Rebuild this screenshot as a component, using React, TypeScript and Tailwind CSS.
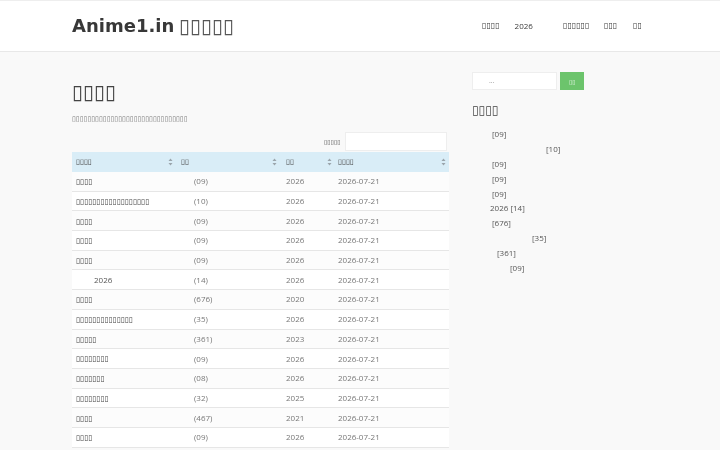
import React from "react";

const T = ({ n, className = "" }: { n: number; className?: string }) => (
  <span className={"inline-block will-change-transform font-['DejaVu_Sans'] " + className}>{"▯".repeat(n)}</span>
);

const Sort = () => (
  <svg width="5" height="8" viewBox="0 0 5 8" className="shrink-0">
    <path d="M2.5 0.5 L4.5 3 L0.5 3 Z" fill="#9aa4ab" />
    <path d="M2.5 7.5 L4.5 5 L0.5 5 Z" fill="#9aa4ab" />
  </svg>
);

const rows: { n: number; pre?: string; ep: string; year: string }[] = [
  { n: 4, ep: "(09)", year: "2026" },
  { n: 18, ep: "(10)", year: "2026" },
  { n: 4, ep: "(09)", year: "2026" },
  { n: 4, ep: "(09)", year: "2026" },
  { n: 4, ep: "(09)", year: "2026" },
  { n: 0, pre: "2026", ep: "(14)", year: "2026" },
  { n: 4, ep: "(676)", year: "2020" },
  { n: 14, ep: "(35)", year: "2026" },
  { n: 5, ep: "(361)", year: "2023" },
  { n: 8, ep: "(09)", year: "2026" },
  { n: 7, ep: "(08)", year: "2026" },
  { n: 8, ep: "(32)", year: "2025" },
  { n: 4, ep: "(467)", year: "2021" },
  { n: 4, ep: "(09)", year: "2026" },
];

const side: { indent: string; text: string }[] = [
  { indent: "pl-[20px]", text: "[09]" },
  { indent: "pl-[74px]", text: "[10]" },
  { indent: "pl-[20px]", text: "[09]" },
  { indent: "pl-[20px]", text: "[09]" },
  { indent: "pl-[20px]", text: "[09]" },
  { indent: "pl-[18px]", text: "2026 [14]" },
  { indent: "pl-[20px]", text: "[676]" },
  { indent: "pl-[60px]", text: "[35]" },
  { indent: "pl-[25px]", text: "[361]" },
  { indent: "pl-[38px]", text: "[09]" },
];

export default function App() {
  return (
    <div className="min-h-[450px] bg-[#f9f9f9] font-['Open_Sans',sans-serif] text-[#555]">
      <header className="h-[52px] bg-white border-t border-t-[#eeeeee] border-b border-b-[#e8e8e8]">
        <div className="w-[576px] mx-auto h-full flex items-center justify-between">
          <h1 className="will-change-transform font-['DejaVu_Sans',sans-serif] font-bold text-[18px] text-[#383838] leading-none flex items-center">
            Anime1.in
            <T n={5} className="ml-[5px] font-normal text-[20px] text-[#555]" />
          </h1>
          <nav className="will-change-transform flex items-center text-[8px] text-[#3a3a3a] mr-[7px]">
            <T n={4} className="text-[8px]" />
            <span className="ml-[15px]">2026</span>
            <T n={6} className="text-[8px] ml-[30px]" />
            <T n={3} className="text-[8px] ml-[15px]" />
            <T n={2} className="text-[8px] ml-[15px]" />
          </nav>
        </div>
      </header>

      <div className="w-[576px] mx-auto flex gap-[23px]">
        <main className="will-change-transform w-[377px] pt-[28px]">
          <h2 className="text-[20px] leading-[24px] text-[#444]">
            <T n={4} />
          </h2>
          <p className="mt-[8px] text-[8px] leading-[12px] text-[#777]">
            <T n={30} className="text-[7px]" />
          </p>
          <div className="mt-[7px] flex items-center justify-end gap-[4px] pr-[2px]">
            <T n={5} className="text-[6px] text-[#444]" />
            <div className="w-[102px] h-[19px] bg-white border border-[#eeeeee]" />
          </div>
          <div className="mt-[1px] text-[8px]">
            <div className="flex h-[20px] items-center bg-[#d9edf7] text-[#444]">
              <div className="w-[104px] flex items-center justify-between pl-[4px] pr-[3px]">
                <T n={4} className="text-[7.2px]" />
                <Sort />
              </div>
              <div className="w-[105px] flex items-center justify-between pl-[5px] pr-[4px]">
                <T n={2} className="text-[7.2px]" />
                <Sort />
              </div>
              <div className="w-[53px] flex items-center justify-between pl-[5px] pr-[2px]">
                <T n={2} className="text-[7.2px]" />
                <Sort />
              </div>
              <div className="w-[115px] flex items-center justify-between pl-[4px] pr-[3px]">
                <T n={4} className="text-[7.2px]" />
                <Sort />
              </div>
            </div>
            {rows.map((r, i) => (
              <div
                key={i}
                className={
                  "flex h-[19.7px] items-center border-b border-[#e6e6e6] " +
                  (i % 2 === 0 ? "bg-[#fcfcfc]" : "bg-white")
                }
              >
                <div className="w-[104px] pl-[4px] text-[#444]">
                  {r.pre ? (
                    <span className="pl-[18px] text-[#555]">{r.pre}</span>
                  ) : (
                    <T n={r.n} className="text-[7.4px]" />
                  )}
                </div>
                <div className="w-[105px] pl-[18px] text-[#777]">{r.ep}</div>
                <div className="w-[53px] pl-[5px] text-[#777]">{r.year}</div>
                <div className="w-[115px] pl-[4px] text-[#777]">2026-07-21</div>
              </div>
            ))}
          </div>
        </main>

        <aside className="will-change-transform w-[176px] pt-[20px]">
          <div className="flex items-center gap-[3px]">
            <div className="w-[85px] h-[18px] bg-white border border-[#eeeeee] flex items-center pl-[16px] text-[7px] text-[#999]">
              ...
            </div>
            <button className="w-[24px] h-[18px] bg-[#6cc46c] text-[#e8f6e8] flex items-center justify-center">
              <T n={2} className="text-[6px]" />
            </button>
          </div>
          <h3 className="mt-[12px] text-[12px] leading-[16px] text-[#444]">
            <T n={4} />
          </h3>
          <ul className="mt-[9px] text-[8px] text-[#555]">
            {side.map((s, i) => (
              <li key={i} className={"h-[14.8px] flex items-center " + s.indent}>
                {s.text}
              </li>
            ))}
          </ul>
        </aside>
      </div>
    </div>
  );
}
